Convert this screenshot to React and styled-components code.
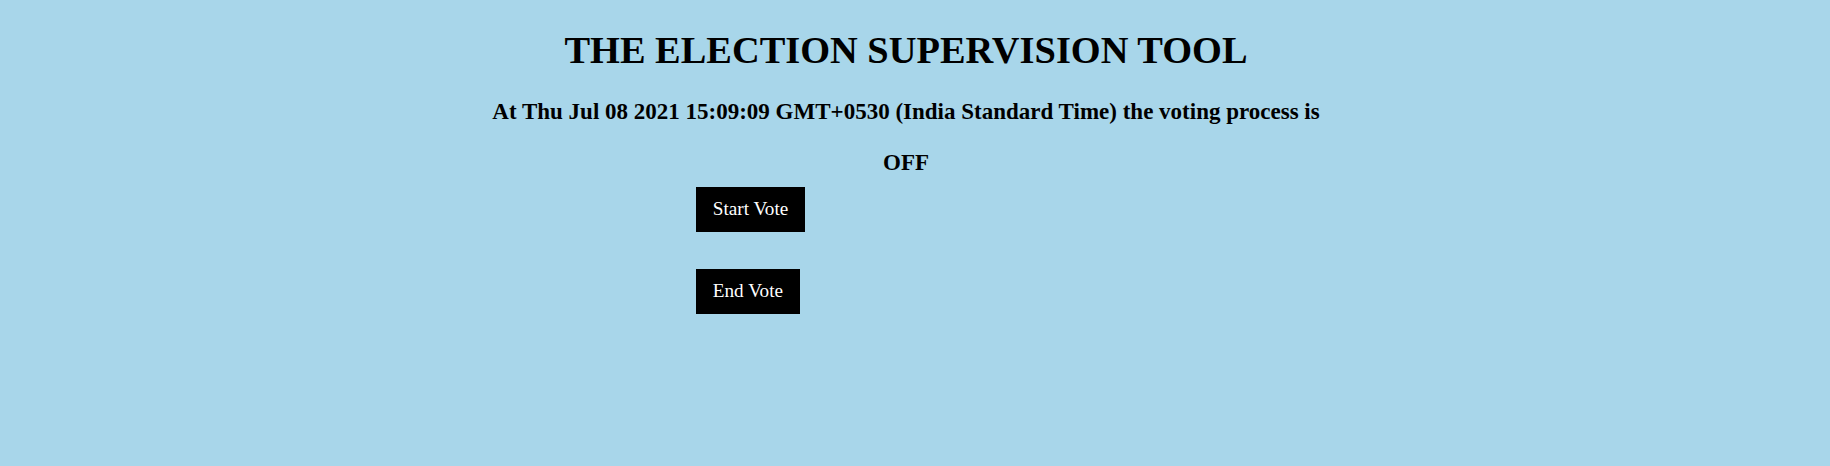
import React from "react";
import styled, { createGlobalStyle } from "styled-components";

const Global = createGlobalStyle`
  html, body { margin: 0; padding: 0; background: #a8d6ea; }
  body { font-family: "Liberation Serif", "Times New Roman", serif; color: #000; }
`;

const Page = styled.div`
  width: 1812px;
  height: 466px;
  display: flex;
  flex-direction: column;
  align-items: center;
  padding-top: 28.25px;
  box-sizing: border-box;
`;

const Title = styled.h1`
  margin: 0;
  font-size: 38.4px;
  font-weight: bold;
  line-height: 44.2px;
  white-space: nowrap;
`;

const Status = styled.h3`
  margin: ${(p) => p.$top}px 0 0;
  font-size: 23px;
  font-weight: bold;
  line-height: 26.45px;
  white-space: nowrap;
`;

const Controls = styled.div`
  align-self: stretch;
  display: flex;
  flex-direction: column;
  align-items: flex-start;
  gap: 37px;
  margin-top: 10.45px;
  padding-left: 696px;
`;

const Button = styled.button`
  background: #000;
  color: #fff;
  border: none;
  font-family: "Liberation Serif", "Times New Roman", serif;
  font-size: 19.2px;
  line-height: 22px;
  padding: 11.5px 16.8px;
  cursor: pointer;
`;

export default function App() {
  return (
    <>
      <Global />
      <Page>
        <Title>THE ELECTION SUPERVISION TOOL</Title>
        <Status $top={26.85}>
          At Thu Jul 08 2021 15:09:09 GMT+0530 (India Standard Time) the voting process is
        </Status>
        <Status $top={24.05}>OFF</Status>
        <Controls>
          <Button>Start Vote</Button>
          <Button>End Vote</Button>
        </Controls>
      </Page>
    </>
  );
}
